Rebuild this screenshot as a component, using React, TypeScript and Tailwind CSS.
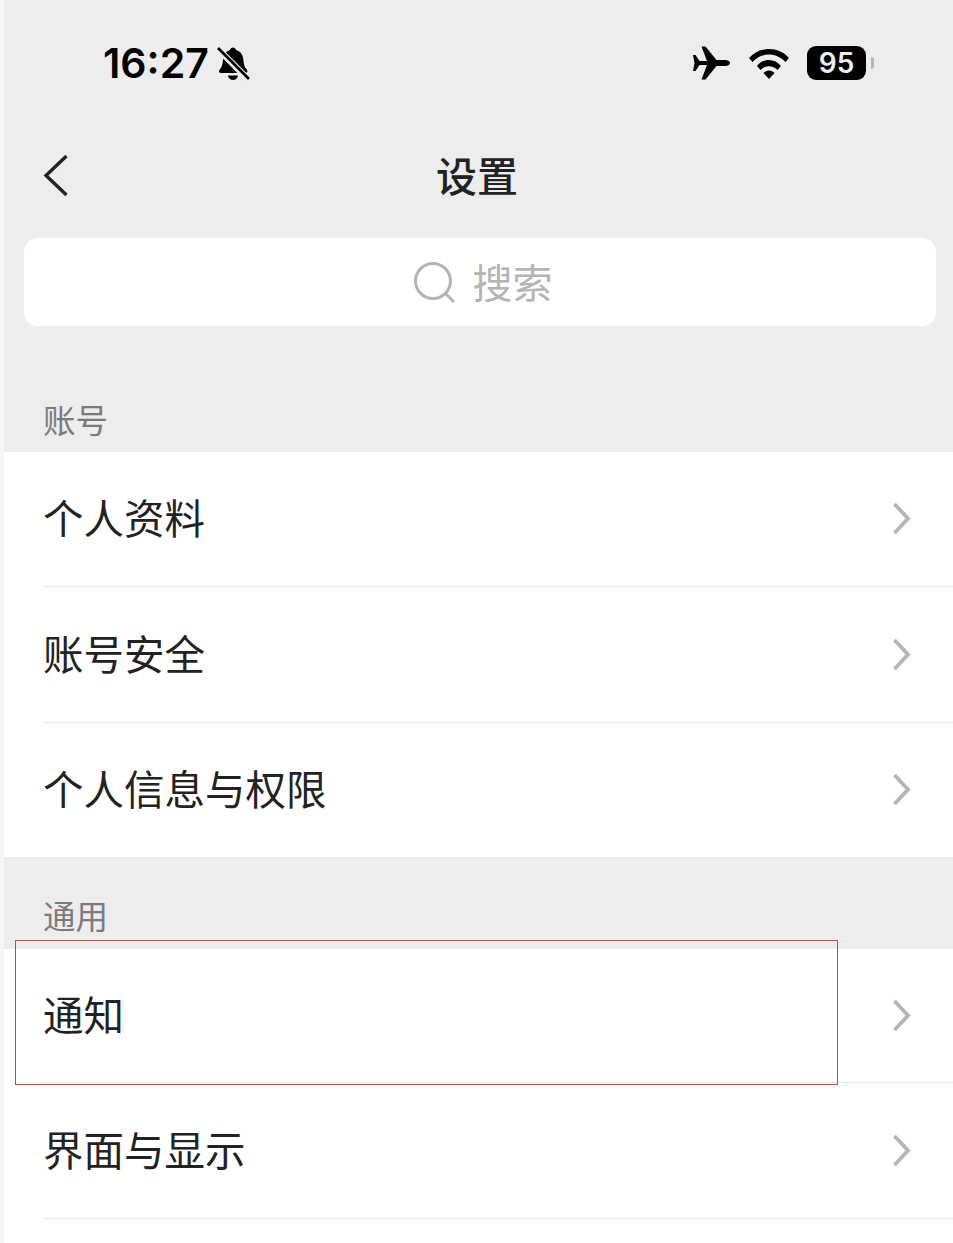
import React from 'react';

const cjk = "font-['Noto_Sans_CJK_SC','Noto_Sans_CJK_JP',sans-serif]";

const Chevron = () => (
    <svg width="20" height="34" viewBox="0 0 20 34" fill="none" className="shrink-0">
        <path d="M2.5 2 L16 16.500 L2.5 31" stroke="#b5b5b5" strokeWidth="3.800" />
    </svg>
);

const Row = ({ label, divider = true, height = 'h-[135px]' }: { label: string; divider?: boolean; height?: string }) => (
    <div className={`${height} pl-[39px] shrink-0`}>
        <div className={`h-full flex items-center justify-between pr-[41px] ${divider ? 'border-b border-[#e8e8e8]' : ''}`}>
            <span className="text-[40.500px] leading-none text-[#222222] pb-[3px]">{label}</span>
            <Chevron />
        </div>
    </div>
);

const SectionLabel = ({ label, height, bottom }: { label: string; height: string; bottom: string }) => (
    <div className={`${height} pl-[39px] flex items-end shrink-0`}>
        <span className={`text-[32.500px] leading-none text-[#7a7a7a] ${bottom}`}>{label}</span>
    </div>
);

const StatusBar = () => (
    <div className="h-[126px] flex items-center justify-between pl-[99px] pr-[79px] shrink-0">
        <div className="flex items-center gap-[7px]">
            <span className="font-['Inter',sans-serif] text-[41px] leading-none font-semibold tracking-[0px] text-black">16:27</span>
            <svg width="34" height="36" viewBox="0 0 34 36" className="mt-[2px]">
                <path d="M17 1.5c1.6 0 2.7 1 3 2.6 5 1.4 7 5.4 7.4 10 .4 4.4 1 7 3.6 10 1 1.400.2 3-1.600 3H5c-1.800 0-2.600-1.600-1.600-3 2.600-3 3.200-5.600 3.600-10 .4-4.600 2.400-8.600 7-10 .3-1.600 1.400-2.600 3-2.600z" fill="#000" />
                <path d="M12 29.500h10c-.4 2.800-2.400 4.500-5 4.500s-4.600-1.700-5-4.500z" fill="#000" />
                <path d="M2 3 L32 33" stroke="#ededed" strokeWidth="6.500" />
                <path d="M2 2 L33 33" stroke="#000" strokeWidth="2.600" />
            </svg>
        </div>
        <div className="flex items-center">
            <svg width="38" height="34" viewBox="0 0 38 34" className="mr-[18px]">
                <path d="M1 9 h2.500 l4 6 h7.500 L9.500 0.500 h4 L24.500 14 h8.500 c2.500 0 5 1.300 5 3 s-2.500 3-5 3 h-8.500 L13.500 33.500 h-4 L15 19 H7.500 l-4 6 H1 l1.500-8z" fill="#000" />
            </svg>
            <svg width="42" height="32" viewBox="0 0 42 32" className="mr-[17px]">
                <path d="M1 11 C11-1 31-1 41 11 l-3.500 4 C28 5 14 5 4.500 15z" fill="#000" />
                <path d="M9 19 C15 11 27 11 33 19 l-3.500 4 C24.500 18 17.500 18 12.500 23z" fill="#000" />
                <path d="M15.500 26 C18.500 22.500 23.500 22.500 26.500 26 L21 32z" fill="#000" />
            </svg>
            <div className="w-[59px] h-[34px] rounded-[9px] bg-black flex items-center justify-center">
                <span className="font-['Inter',sans-serif] text-[28px] leading-none font-semibold text-[#ededed]">95</span>
            </div>
            <div className="w-[3px] h-[12px] ml-[5px] rounded-r-full bg-[#b5b5b5]" />
        </div>
    </div>
);

const App: React.FC = () => {
    return (
        <div className={`relative w-[953px] h-[1243px] overflow-hidden bg-[#f6f6f6] pl-[4px] ${cjk}`}>
            <div className="h-full flex flex-col bg-[#ededed]">
                <StatusBar />

                <div className="h-[102px] relative flex items-center justify-center shrink-0">
                    <svg width="26" height="44" viewBox="0 0 26 44" fill="none" className="absolute left-[39px] top-[28px]">
                        <path d="M23.500 2 L3 21.500 L23.500 41" stroke="#222222" strokeWidth="3.400" />
                    </svg>
                    <span className="text-[41px] leading-none font-medium text-[#222222] -ml-[3px] pb-[6px]">设置</span>
                </div>

                <div className="px-[20px] pt-[10px] pr-[17px] shrink-0">
                    <div className="h-[88px] rounded-[14px] bg-white flex items-center justify-center gap-[17px] pl-[6px]">
                        <svg width="42" height="42" viewBox="0 0 42 42" fill="none" className="mt-[2px]">
                            <circle cx="19" cy="19" r="17.500" stroke="#b4b4b4" strokeWidth="3" />
                            <path d="M31 31 L40 40" stroke="#b4b4b4" strokeWidth="3" />
                        </svg>
                        <span className="text-[40px] leading-none text-[#b4b4b4] pb-[3px]">搜索</span>
                    </div>
                </div>

                <SectionLabel label="账号" height="h-[126px]" bottom="pb-[17px]" />
                <div className="bg-white shrink-0">
                    <Row label="个人资料" />
                    <Row label="账号安全" height="h-[136px]" />
                    <Row label="个人信息与权限" divider={false} height="h-[134px]" />
                </div>

                <SectionLabel label="通用" height="h-[92px]" bottom="pb-[18px]" />
                <div className="flex-1 bg-white">
                    <Row label="通知" height="h-[134px]" />
                    <Row label="界面与显示" height="h-[136px]" />
                </div>
            </div>

            <div className="absolute left-[15px] top-[940px] w-[823px] h-[145px] border border-[#f0353a]" />
        </div>
    );
};

export default App;
